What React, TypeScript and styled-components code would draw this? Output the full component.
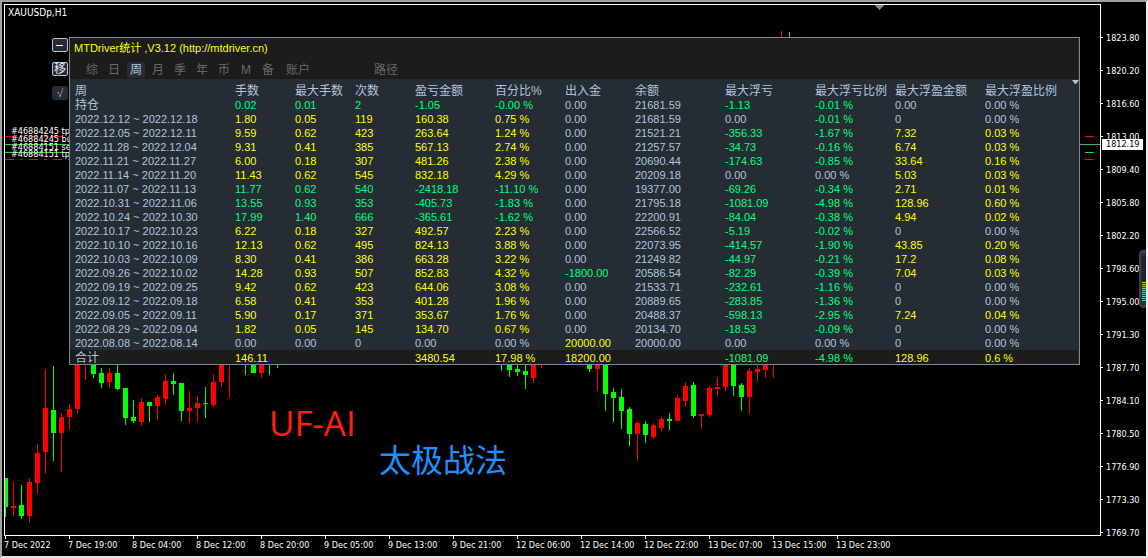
import React from "react";
import styled, { createGlobalStyle, css } from "styled-components";

const GREEN = "#00ff00";
const RED = "#ff0000";
const STEEL = "#b0c4de";
const SLATE = "#778899";
const YELLOW = "#ffff00";
const SPRING = "#00ff7f";

const GlobalStyle = createGlobalStyle`
  * { box-sizing: border-box; }
  body { margin: 0; background: #000; }
  button { font: inherit; }
`;

const Terminal = styled.main`
  position: relative;
  display: grid;
  grid-template-columns: minmax(0, 1fr) 45px;
  grid-template-rows: 1fr auto;
  min-height: 100vh;
  background: #000;
  border-style: solid;
  border-width: 2px;
  border-color: #a0a0a0 #f0f0f0 #e3e3e3 #a0a0a0;
  padding: 2px 0 0 2px;
  overflow: hidden;
  color: #fff;
  font: 9px/12px "DejaVu Sans Condensed", "DejaVu Sans", "Noto Sans CJK SC", sans-serif;
`;

const Plot = styled.section`
  position: relative;
  border: 1px solid #fff;
  padding: 32px 20px 0 47px;
  overflow: hidden;
`;

const Chart = styled.svg`
  position: absolute;
  inset: 0;
  width: 100%;
  height: 100%;
`;

const Symbol = styled.h1`
  position: absolute;
  top: 2px;
  left: 3px;
  margin: 0;
  font-size: 10px;
  line-height: 12px;
  font-weight: 400;
`;

const OrderLabel = styled.span<{ $top: number }>`
  position: absolute;
  left: 6px;
  top: ${(p) => p.$top}px;
  white-space: nowrap;
`;

const Watermark = styled.span<{ $left: number; $top: number; $color: string; $size: number }>`
  position: absolute;
  left: ${(p) => p.$left}px;
  top: ${(p) => p.$top}px;
  color: ${(p) => p.$color};
  font: ${(p) => p.$size}px/40px "Open Sans", "Noto Sans CJK SC", sans-serif;
  white-space: nowrap;
`;

const Workspace = styled.div`
  position: relative;
  display: flex;
  align-items: flex-start;
`;

const SideButtons = styled.div`
  display: flex;
  flex-direction: column;
  flex: none;
  width: 17px;
  gap: 10px;
  padding-top: 1px;
`;

const SideButton = styled.button<{ $flat?: boolean }>`
  display: flex;
  align-items: center;
  justify-content: center;
  width: 16px;
  height: 14px;
  padding: 0;
  border: 1px solid ${(p) => (p.$flat ? "#262c34" : STEEL)};
  border-radius: 2px;
  background: #262c34;
  color: ${(p) => (p.$flat ? "#8b98ab" : "#e8eef8")};
  font: 12px/12px "Liberation Sans", "Noto Sans CJK SC", sans-serif;
`;

const Panel = styled.section`
  flex: 1;
  min-width: 0;
  border: 1px solid ${SLATE};
  padding-right: 1px;
  background: #262c34;
  font: 11px/14px "Liberation Sans", "Noto Sans CJK SC", sans-serif;
`;

const PanelHeader = styled.header`
  height: 41px;
  padding: 3px 4px 0;
  background: #1c1c1c;
`;

const PanelTitle = styled.h2`
  margin: 0;
  color: ${YELLOW};
  font-size: 11px;
  line-height: 14px;
  font-weight: 400;
`;

const Tabs = styled.nav`
  display: flex;
  gap: 4px;
  padding: 7px 0 0 9px;
`;

const Tab = styled.button<{ $active?: boolean; $wide?: boolean; $far?: boolean }>`
  width: ${(p) => (p.$wide ? 26 : 18)}px;
  height: 16px;
  margin-left: ${(p) => (p.$far ? 58 : p.$wide ? 4 : 0)}px;
  padding: 1px 0 0;
  border: 0;
  border-radius: 2px;
  background: ${(p) => (p.$active ? "#262c34" : "transparent")};
  color: ${(p) => (p.$active ? STEEL : "#696969")};
  font-size: 12px;
  line-height: 15px;
  white-space: nowrap;
`;

const Stats = styled.table`
  width: 100%;
  table-layout: fixed;
  border-collapse: collapse;
  color: ${STEEL};
`;

const Col = styled.col<{ $w?: number }>`
  ${(p) => p.$w && css`width: ${p.$w}px;`}
`;

const HeadCell = styled.th`
  height: 19px;
  padding: 6px 0 0;
  text-align: left;
  font-size: 12px;
  line-height: 13px;
  font-weight: 400;
  white-space: nowrap;
  &:first-child { padding-left: 5px; }
`;

const Cell = styled.td<{ $color: string }>`
  height: 14px;
  padding: 0;
  color: ${(p) => p.$color};
  line-height: 14px;
  white-space: nowrap;
`;

const RowHead = styled.th<{ $large?: boolean }>`
  height: 14px;
  padding: 0 0 0 5px;
  text-align: left;
  font-size: ${(p) => (p.$large ? 12 : 11)}px;
  line-height: 14px;
  font-weight: 400;
  white-space: nowrap;
`;

const TotalRow = styled.tr`
  background: #1c1c1c;
  > * {
    padding-top: 2px;
    line-height: 12px;
  }
`;

const Marker = styled.svg<{ $top: number; $right: number }>`
  position: absolute;
  top: ${(p) => p.$top}px;
  right: ${(p) => p.$right}px;
`;

const PriceAxis = styled.ol`
  position: relative;
  grid-column: 2;
  grid-row: 1 / span 2;
  margin: 0;
  padding: 17px 0 0;
  list-style: none;
`;

const Price = styled.li`
  display: flex;
  align-items: center;
  gap: 3px;
  height: 33px;
  &::before {
    content: "";
    width: 2px;
    height: 1px;
    background: #fff;
  }
`;

const CurrentPrice = styled.li`
  position: absolute;
  top: 135px;
  left: 1px;
  width: 41px;
  height: 11px;
  padding-left: 4px;
  background: #fff;
  color: #000;
  line-height: 11px;
`;

const TimeAxis = styled.ol`
  display: flex;
  grid-column: 1;
  grid-row: 2;
  height: 20px;
  margin: 0;
  padding: 0;
  list-style: none;
`;

const Time = styled.li`
  flex: none;
  width: 64px;
  white-space: nowrap;
  &::before {
    content: "";
    display: block;
    width: 1px;
    height: 3px;
    margin-left: 1px;
    background: #fff;
  }
`;

const Meter = styled.svg`
  position: absolute;
  top: 248px;
  right: -2px;
`;

/* x, wick top, wick bottom, body top, body bottom, rising */
type Candle = [number, number, number, number, number, boolean];
const candles: Candle[] = [
  [5, 478, 517, 478, 507, false], [13, 482, 516, 506, 508, true], [21, 485, 519, 505, 516, false],
  [29, 478, 523, 482, 516, true], [37, 444, 494, 453, 483, true], [45, 369, 474, 408, 452, true],
  [53, 366, 461, 410, 433, false], [61, 413, 472, 417, 433, true], [69, 404, 430, 409, 417, true],
  [77, 350, 414, 350, 409, true], [85, 350, 380, 350, 360, true], [93, 350, 378, 350, 374, false],
  [101, 368, 388, 373, 383, false], [109, 368, 388, 373, 382, true], [117, 350, 390, 373, 389, false],
  [125, 388, 425, 388, 418, false], [133, 400, 423, 417, 421, false], [141, 398, 426, 402, 422, true],
  [149, 402, 422, 402, 406, false], [157, 395, 420, 397, 406, true], [165, 374, 405, 381, 399, true],
  [173, 373, 395, 381, 384, false], [181, 383, 421, 383, 411, false], [189, 391, 423, 408, 411, true],
  [197, 396, 422, 403, 408, true], [205, 387, 418, 403, 404, false], [213, 374, 407, 382, 405, true],
  [221, 350, 387, 350, 382, true], [229, 350, 398, 350, 360, true], [245, 350, 375, 350, 360, false],
  [253, 350, 373, 350, 373, false], [261, 350, 378, 350, 373, true], [269, 350, 375, 350, 360, false],
  [277, 350, 368, 350, 360, false], [501, 350, 371, 350, 360, false], [509, 350, 377, 350, 370, false],
  [517, 350, 376, 369, 372, false], [525, 350, 389, 371, 375, false], [533, 350, 383, 350, 378, true],
  [541, 350, 368, 350, 360, true], [589, 350, 372, 350, 369, false], [597, 350, 391, 350, 369, true],
  [605, 350, 411, 350, 394, false], [613, 388, 422, 392, 398, false], [621, 389, 429, 397, 411, false],
  [629, 407, 446, 409, 434, false], [637, 421, 461, 423, 434, true], [645, 421, 443, 424, 435, false],
  [653, 423, 439, 425, 437, true], [661, 417, 431, 419, 428, true], [669, 413, 430, 419, 421, false],
  [677, 395, 421, 398, 421, true], [685, 382, 407, 386, 401, true], [693, 382, 418, 385, 416, false],
  [701, 414, 429, 414, 416, true], [709, 386, 417, 388, 415, true], [717, 377, 396, 387, 389, true],
  [725, 350, 391, 350, 387, true], [733, 350, 396, 350, 386, false], [741, 383, 411, 385, 397, false],
  [749, 368, 414, 371, 397, true], [757, 350, 381, 369, 372, true], [765, 350, 378, 350, 370, true],
  [773, 350, 378, 350, 360, true], [781, 31, 60, 45, 60, true], [789, 32, 60, 45, 60, false],
];

const orders = [
  { top: 120, text: "#46884245 tp", y: 136, color: RED, dash: "9 6 3 6" },
  { top: 128, text: "#46884245 buy", y: 144, color: "#32cd32", dash: undefined },
  { top: 136, text: "#46884151 sell", y: 152, color: "#32cd32", dash: undefined },
  { top: 143, text: "#46884151 tp", y: 159, color: RED, dash: "9 6 3 6" },
];

const prices = [
  "1823.80", "1820.20", "1816.60", "1813.00", "1809.40", "1805.80", "1802.20", "1798.60",
  "1795.00", "1791.30", "1787.70", "1784.10", "1780.50", "1776.90", "1773.30", "1769.70",
];

const times = [
  "7 Dec 2022", "7 Dec 19:00", "8 Dec 04:00", "8 Dec 12:00", "8 Dec 20:00", "9 Dec 05:00", "9 Dec 13:00",
  "9 Dec 21:00", "12 Dec 06:00", "12 Dec 14:00", "12 Dec 22:00", "13 Dec 07:00", "13 Dec 15:00", "13 Dec 23:00",
];

const tabs = ["综", "日", "周", "月", "季", "年", "币", "M", "备"];

const columns: { label: string; width?: number }[] = [
  { label: "周", width: 165 }, { label: "手数", width: 60 }, { label: "最大手数", width: 60 },
  { label: "次数", width: 60 }, { label: "盈亏金额", width: 80 }, { label: "百分比%", width: 70 },
  { label: "出入金", width: 70 }, { label: "余额", width: 90 }, { label: "最大浮亏", width: 90 },
  { label: "最大浮亏比例", width: 80 }, { label: "最大浮盈金额", width: 90 }, { label: "最大浮盈比例" },
];

const rows = `持仓|0.02|0.01|2|-1.05|-0.00 %|0.00|21681.59|-1.13|-0.01 %|0.00|0.00 %
2022.12.12 ~ 2022.12.18|1.80|0.05|119|160.38|0.75 %|0.00|21681.59|0.00|-0.01 %|0|0.00 %
2022.12.05 ~ 2022.12.11|9.59|0.62|423|263.64|1.24 %|0.00|21521.21|-356.33|-1.67 %|7.32|0.03 %
2022.11.28 ~ 2022.12.04|9.31|0.41|385|567.13|2.74 %|0.00|21257.57|-34.73|-0.16 %|6.74|0.03 %
2022.11.21 ~ 2022.11.27|6.00|0.18|307|481.26|2.38 %|0.00|20690.44|-174.63|-0.85 %|33.64|0.16 %
2022.11.14 ~ 2022.11.20|11.43|0.62|545|832.18|4.29 %|0.00|20209.18|0.00|0.00 %|5.03|0.03 %
2022.11.07 ~ 2022.11.13|11.77|0.62|540|-2418.18|-11.10 %|0.00|19377.00|-69.26|-0.34 %|2.71|0.01 %
2022.10.31 ~ 2022.11.06|13.55|0.93|353|-405.73|-1.83 %|0.00|21795.18|-1081.09|-4.98 %|128.96|0.60 %
2022.10.24 ~ 2022.10.30|17.99|1.40|666|-365.61|-1.62 %|0.00|22200.91|-84.04|-0.38 %|4.94|0.02 %
2022.10.17 ~ 2022.10.23|6.22|0.18|327|492.57|2.23 %|0.00|22566.52|-5.19|-0.02 %|0|0.00 %
2022.10.10 ~ 2022.10.16|12.13|0.62|495|824.13|3.88 %|0.00|22073.95|-414.57|-1.90 %|43.85|0.20 %
2022.10.03 ~ 2022.10.09|8.30|0.41|386|663.28|3.22 %|0.00|21249.82|-44.97|-0.21 %|17.2|0.08 %
2022.09.26 ~ 2022.10.02|14.28|0.93|507|852.83|4.32 %|-1800.00|20586.54|-82.29|-0.39 %|7.04|0.03 %
2022.09.19 ~ 2022.09.25|9.42|0.62|423|644.06|3.08 %|0.00|21533.71|-232.61|-1.16 %|0|0.00 %
2022.09.12 ~ 2022.09.18|6.58|0.41|353|401.28|1.96 %|0.00|20889.65|-283.85|-1.36 %|0|0.00 %
2022.09.05 ~ 2022.09.11|5.90|0.17|371|353.67|1.76 %|0.00|20488.37|-598.13|-2.95 %|7.24|0.04 %
2022.08.29 ~ 2022.09.04|1.82|0.05|145|134.70|0.67 %|0.00|20134.70|-18.53|-0.09 %|0|0.00 %
2022.08.08 ~ 2022.08.14|0.00|0.00|0|0.00|0.00 %|20000.00|20000.00|0.00|0.00 %|0|0.00 %`
  .split("\n")
  .map((line) => line.split("|"));

const total = ["合计", "146.11", "", "", "3480.54", "17.98 %", "18200.00", "", "-1081.09", "-4.98 %", "128.96", "0.6 %"];

const BALANCE = 7;

/* Lots and counts follow the sign of the period's profit; other figures follow their own. */
function cellColor(row: string[], i: number): string {
  if (i === BALANCE) return STEEL;
  const value = parseFloat(i <= 3 ? row[4] : row[i]);
  if (value < 0 || row[i].startsWith("-")) return SPRING;
  return value > 0 ? YELLOW : STEEL;
}

function CandleChart() {
  return (
    <Chart aria-hidden="true" shapeRendering="crispEdges">
      <g transform="translate(-5 -5)">
        {orders.map((o) => (
          <React.Fragment key={o.y}>
            <path d={`M5 ${o.y}.5H69`} stroke={o.color} strokeDasharray={o.dash} />
            <path d={`M1085 ${o.y}.5H1094`} stroke={o.color} />
          </React.Fragment>
        ))}
        <path d="M1080 144.5H1085M1094 144.5H1101" stroke={SLATE} />
        {candles.map(([x, hi, lo, top, bottom, up]) => {
          const wickOnly = bottom === 360;
          return (
            <g key={x} fill={up ? RED : GREEN}>
              <rect x={x} y={hi} width="1" height={lo - hi} />
              {!wickOnly && <rect x={x - 2} y={top} width="5" height={bottom - top} />}
            </g>
          );
        })}
        <path d="M875 5H884L880 10H879Z" fill={SLATE} />
      </g>
    </Chart>
  );
}

function StatsTable() {
  return (
    <Stats>
      <colgroup>
        {columns.map((c) => <Col key={c.label} $w={c.width} />)}
      </colgroup>
      <thead>
        <tr>{columns.map((c) => <HeadCell key={c.label} scope="col">{c.label}</HeadCell>)}</tr>
      </thead>
      <tbody>
        {rows.map((row, r) => (
          <tr key={row[0]}>
            <RowHead scope="row" $large={r === 0}>{row[0]}</RowHead>
            {row.slice(1).map((v, i) => <Cell key={i} $color={cellColor(row, i + 1)}>{v}</Cell>)}
          </tr>
        ))}
      </tbody>
      <tfoot>
        <TotalRow>
          <RowHead scope="row" $large>{total[0]}</RowHead>
          {total.slice(1).map((v, i) => <Cell key={i} $color={cellColor(total, i + 1)}>{v}</Cell>)}
        </TotalRow>
      </tfoot>
    </Stats>
  );
}

export default function App() {
  return (
    <>
      <GlobalStyle />
      <Terminal>
        <Plot>
          <CandleChart />
          <Symbol>XAUUSDp,H1</Symbol>
          {orders.map((o) => <OrderLabel key={o.y} $top={o.top}>{o.text}</OrderLabel>)}
          <Watermark $left={264} $top={398} $color="#ff2010" $size={35}>UF-AI</Watermark>
          <Watermark $left={374} $top={435} $color="#1e90ff" $size={32}>太极战法</Watermark>
          <Workspace>
            <SideButtons>
              <SideButton aria-label="收起">
                <svg width="8" height="2" aria-hidden="true"><path d="M0 1H7" stroke="#fff" strokeWidth="1" shapeRendering="crispEdges" /></svg>
              </SideButton>
              <SideButton>移</SideButton>
              <SideButton $flat>√</SideButton>
            </SideButtons>
            <Panel>
              <PanelHeader>
                <PanelTitle>MTDriver统计 ,V3.12 (http://mtdriver.cn)</PanelTitle>
                <Tabs>
                  {tabs.map((t) => <Tab key={t} $active={t === "周"}>{t}</Tab>)}
                  <Tab $wide>账户</Tab>
                  <Tab $wide $far>路径</Tab>
                </Tabs>
              </PanelHeader>
              <StatsTable />
            </Panel>
            <Marker $top={43} $right={1} width="7" height="4" aria-hidden="true">
              <path d="M0 0H7L4 4H3Z" fill="#c0c0c0" />
            </Marker>
          </Workspace>
        </Plot>
        <PriceAxis>
          {prices.map((p) => <Price key={p}>{p}</Price>)}
          <CurrentPrice>1812.19</CurrentPrice>
        </PriceAxis>
        <TimeAxis>
          {times.map((t) => <Time key={t}>{t}</Time>)}
        </TimeAxis>
        <Meter width="9" height="58" aria-hidden="true" shapeRendering="crispEdges">
          <path d="M2 0H9V58H2L0 56V2Z" fill="#3c3d4c" />
          <rect x="2" y="3" width="7" height="52" fill="#2a2c38" />
          {Array.from({ length: 23 }, (_, i) => (
            <rect key={i} x="3" y={6 + i * 2} width="4" height="1"
              fill={i < 13 ? "#16181f" : i < 16 ? "#a8d848" : i < 19 ? "#70d880" : "#40d8b0"} />
          ))}
        </Meter>
      </Terminal>
    </>
  );
}
